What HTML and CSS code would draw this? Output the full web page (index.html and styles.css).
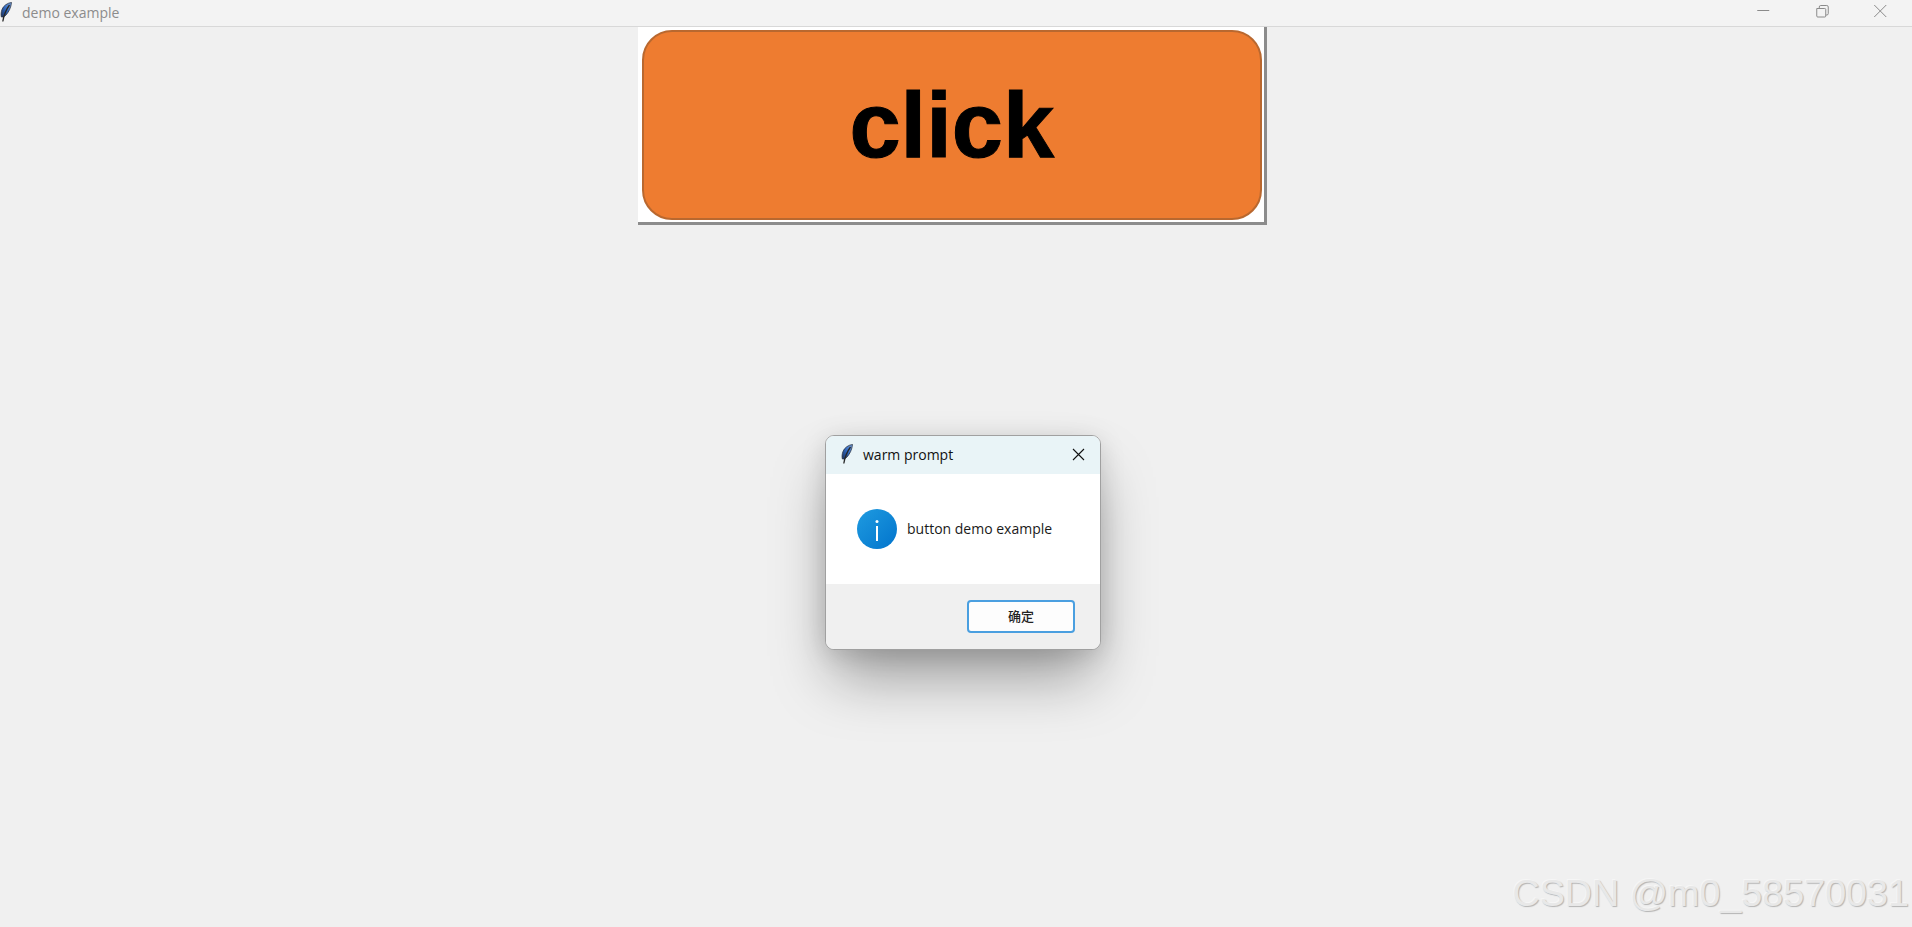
FILE: index.html
```html
<!DOCTYPE html>
<html lang="en">
<head>
<meta charset="utf-8">
<title>demo example</title>
<link rel="stylesheet" href="styles.css">
</head>
<body>
<svg class="defs" width="0" height="0" aria-hidden="true">
  <defs>
    <linearGradient id="quill" x1="1" y1="0" x2="0" y2="1">
      <stop offset="0" stop-color="#7fa8e4"/>
      <stop offset=".5" stop-color="#2f68c0"/>
      <stop offset="1" stop-color="#1b2f58"/>
    </linearGradient>
    <linearGradient id="info" x1="0" y1="0" x2="1" y2="1">
      <stop offset="0" stop-color="#1f9be0"/>
      <stop offset="1" stop-color="#0274cc"/>
    </linearGradient>
    <symbol id="feather" viewBox="0 0 12 20">
      <path d="M11.500.5C7.500 1 3.500 3.500 2 7.500c-1 2.800-1.200 5.200-.6 7.500 1.600.2 3.300-.6 4.600-2C8.800 10 11 5.500 11.500.5z" fill="url(#quill)" stroke="#2a3242" stroke-width=".8"/>
      <path d="M9.500 3C6.500 7 4 12 2.800 19.500" fill="none" stroke="#262626" stroke-width="1.300"/>
    </symbol>
  </defs>
</svg>

<header class="titlebar">
  <div class="titlebar-left">
    <svg class="feather feather-main"><use href="#feather"/></svg>
    <span class="title">demo example</span>
  </div>
  <div class="controls">
    <svg class="control" viewBox="0 0 58 26"><path d="M23 10.500h12" /></svg>
    <svg class="control" viewBox="0 0 58 26"><path d="M23.500 8.500h8a1 1 0 0 1 1 1v6.500a1 1 0 0 1-1 1h-7a1 1 0 0 1-1-1zM26 8.500V7a1.500 1.500 0 0 1 1.500-1.500h6a1.500 1.500 0 0 1 1.500 1.500v6.500a1.500 1.500 0 0 1-1.500 1.500h-1"/></svg>
    <svg class="control" viewBox="0 0 58 26"><path d="M23 5l12 12M35 5L23 17"/></svg>
  </div>
</header>

<main class="content">
  <div class="image-button">
    <div class="image-face">click</div>
  </div>
</main>

<section class="dialog">
  <div class="dialog-head">
    <svg class="feather feather-dialog"><use href="#feather"/></svg>
    <span class="dialog-title">warm prompt</span>
    <svg class="dialog-close" viewBox="0 0 13 13"><path d="M1 1l11 11M12 1L1 12"/></svg>
  </div>
  <div class="dialog-body">
    <svg class="info" viewBox="0 0 40 40">
      <circle cx="20" cy="20" r="20" fill="url(#info)"/>
      <rect x="19" y="17" width="2" height="15" fill="#fff"/>
      <circle cx="20" cy="12.500" r="1.500" fill="#fff"/>
    </svg>
    <span class="message">button demo example</span>
  </div>
  <div class="dialog-foot">
    <button class="ok" type="button">确定</button>
  </div>
</section>

<div class="watermark">CSDN @m0_58570031</div>
</body>
</html>
```
FILE: styles.css
```css
* { box-sizing: border-box; }

html, body {
  margin: 0;
  height: 100%;
}

body {
  position: relative;
  overflow: hidden;
  display: flex;
  flex-direction: column;
  background: #f0f0f0;
  font-family: "Open Sans", "Noto Sans CJK SC", sans-serif;
}

.defs { position: absolute; }

.titlebar {
  flex: none;
  height: 27px;
  display: flex;
  justify-content: space-between;
  background: #f3f3f3;
  border-bottom: 1px solid #d8d8d8;
}

.titlebar-left {
  display: flex;
  align-items: center;
  padding-bottom: 2px;
}

.feather { display: block; }

.feather-main {
  width: 12px;
  height: 20px;
  margin-right: 10px;
}

.title {
  font-size: 14px;
  color: #8c8c8c;
}

.controls {
  display: flex;
  padding-right: 2.500px;
}

.control {
  width: 58.500px;
  height: 26px;
  fill: none;
  stroke: #8a8a8a;
  stroke-width: 1;
}

.content {
  flex: 1;
  display: flex;
  justify-content: center;
  align-items: flex-start;
  padding-right: 7px;
}

.image-button {
  width: 629px;
  height: 198px;
  padding: 3px 2px 2px 3.500px;
  background: #fff;
  border-right: 3px solid #8c8c8c;
  border-bottom: 3px solid #8c8c8c;
}

.image-face {
  height: 100%;
  display: flex;
  align-items: center;
  justify-content: center;
  background: #ee7c30;
  border: 2.500px solid #b9682f;
  border-radius: 30px;
  font-family: "Liberation Sans", Arial, sans-serif;
  font-weight: 700;
  font-size: 92px;
  line-height: 1;
  color: #000;
  -webkit-text-stroke: 1px #000;
}

.dialog {
  position: absolute;
  left: 825px;
  top: 435px;
  width: 276px;
  height: 215px;
  display: flex;
  flex-direction: column;
  overflow: hidden;
  border: 1px solid #a0a0a0;
  border-radius: 9px;
  background: #fff;
  box-shadow: 0 34px 60px -8px rgba(0, 0, 0, .36), 0 4px 26px rgba(0, 0, 0, .13);
}

.dialog-head {
  flex: none;
  height: 38px;
  display: flex;
  align-items: center;
  padding: 0 10px 2px 15px;
  background: #e9f4f7;
}

.feather-dialog {
  width: 12px;
  height: 20px;
  margin-right: 10px;
}

.dialog-title {
  flex: 1;
  font-size: 14px;
  color: #111;
}

.dialog-close {
  width: 13px;
  height: 13px;
  margin-right: 5px;
  fill: none;
  stroke: #111;
  stroke-width: 1.100;
}

.dialog-body {
  flex: none;
  height: 110px;
  display: flex;
  align-items: center;
  gap: 10px;
  padding-left: 31px;
  background: #fff;
}

.info {
  display: block;
  width: 40px;
  height: 40px;
}

.message {
  position: relative;
  top: -1px;
  font-size: 14px;
  color: #1a1a1a;
}

.dialog-foot {
  flex: 1;
  display: flex;
  justify-content: flex-end;
  padding: 16px 25px 0 0;
  background: #f0f0f0;
}

.ok {
  width: 108px;
  height: 33px;
  padding: 0 0 2px;
  border: 2px solid #4a9fe0;
  border-radius: 4px;
  background: #fdfdfd;
  font-family: "Noto Sans CJK SC", sans-serif;
  font-size: 13px;
  font-weight: 500;
  color: #222;
}

.watermark {
  position: absolute;
  right: 3px;
  bottom: 12px;
  font-family: "Liberation Sans", Arial, sans-serif;
  font-size: 37.700px;
  line-height: 1.150;
  color: #e8e8e8;
  text-shadow: 1px 1px 1px #b4b4b4, -1px -1px 0 #f6f6f6;
}
```
